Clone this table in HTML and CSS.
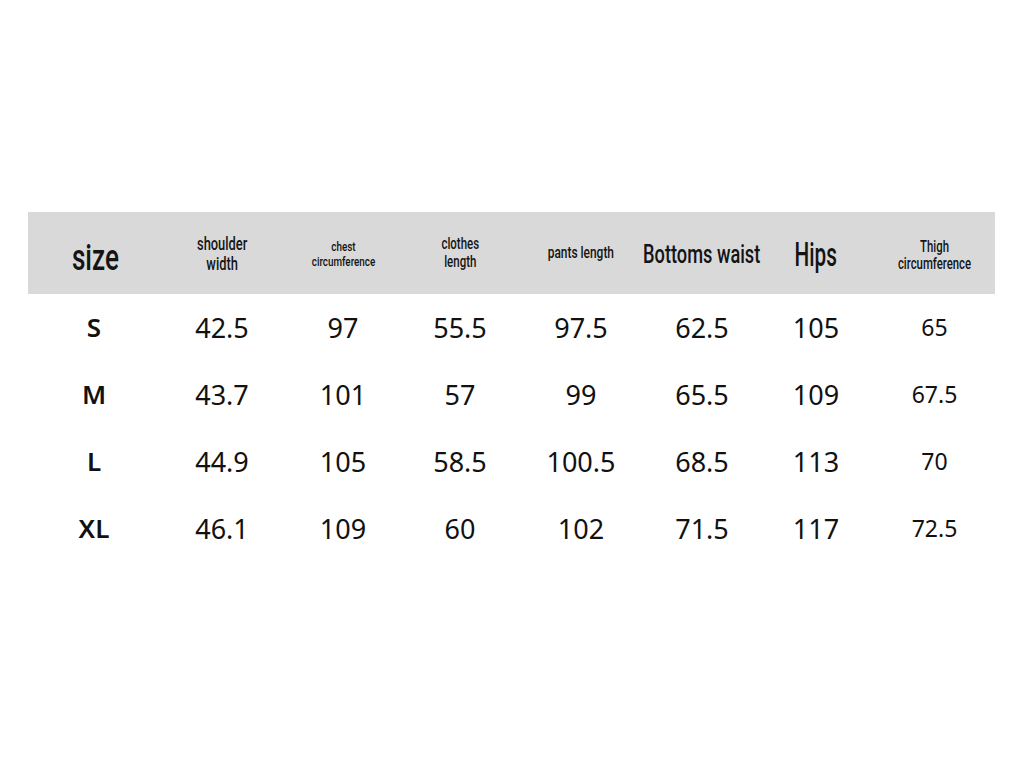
FILE: index.html
```html
<!DOCTYPE html>
<html>
<head>
<meta charset="utf-8">
<link rel="stylesheet" href="styles.css">
</head>
<body>
<div class="sheet">
  <div class="row head">
    <div class="cell"><span class="h h-size">size</span></div>
    <div class="cell"><span class="h h-shoulder">shoulder<br>width</span></div>
    <div class="cell"><span class="h h-chest">chest<br>circumference</span></div>
    <div class="cell"><span class="h h-clothes">clothes<br>length</span></div>
    <div class="cell"><span class="h h-pants">pants length</span></div>
    <div class="cell"><span class="h h-waist">Bottoms waist</span></div>
    <div class="cell"><span class="h h-hips">Hips</span></div>
    <div class="cell"><span class="h h-thigh">Thigh<br>circumference</span></div>
  </div>
  <div class="row data">
    <div class="cell sz">S</div><div class="cell">42.5</div><div class="cell">97</div><div class="cell">55.5</div><div class="cell">97.5</div><div class="cell">62.5</div><div class="cell">105</div><div class="cell sm">65</div>
  </div>
  <div class="row data">
    <div class="cell sz">M</div><div class="cell">43.7</div><div class="cell">101</div><div class="cell">57</div><div class="cell">99</div><div class="cell">65.5</div><div class="cell">109</div><div class="cell sm">67.5</div>
  </div>
  <div class="row data">
    <div class="cell sz">L</div><div class="cell">44.9</div><div class="cell">105</div><div class="cell">58.5</div><div class="cell">100.5</div><div class="cell">68.5</div><div class="cell">113</div><div class="cell sm">70</div>
  </div>
  <div class="row data">
    <div class="cell sz">XL</div><div class="cell">46.1</div><div class="cell">109</div><div class="cell">60</div><div class="cell">102</div><div class="cell">71.5</div><div class="cell">117</div><div class="cell sm">72.5</div>
  </div>
</div>
</body>
</html>
```

FILE: styles.css
```css
html, body {
  margin: 0;
  padding: 0;
  background: #ffffff;
}
body {
  width: 1024px;
  height: 768px;
  overflow: hidden;
  font-family: "Noto Sans", "Open Sans", sans-serif;
  color: #111111;
}
.sheet {
  margin: 212px 0 0 28px;
  width: 967px;
}
.row {
  display: grid;
  grid-template-columns: 134px 120px 122px 112px 130px 112px 116px 121px;
}
.head {
  height: 82px;
  background: #d9d9d9;
}
.cell {
  display: flex;
  align-items: center;
  justify-content: center;
  text-align: center;
}
.h {
  display: inline-block;
  font-family: Roboto, "Noto Sans", sans-serif;
  font-weight: 500;
  color: #141414;
  white-space: nowrap;
}
.h-size { font-size: 36px; transform: scaleX(0.725); padding-top: 9px; }
.h-shoulder { font-size: 18px; line-height: 20px; transform: scaleX(0.715); padding-top: 2px; }
.h-chest { font-size: 13.5px; line-height: 15px; transform: scaleX(0.73); padding-top: 2px; }
.h-clothes { font-size: 16px; line-height: 18px; transform: scaleX(0.717); }
.h-pants { font-size: 16.5px; transform: scaleX(0.723); padding-bottom: 2px; }
.h-waist { font-size: 26px; transform: scaleX(0.70); padding-top: 2px; }
.h-hips { font-size: 34px; transform: scaleX(0.61); padding-top: 2px; }
.h-thigh { font-size: 16px; line-height: 17px; transform: scaleX(0.71); padding-top: 4px; }
.data {
  height: 67px;
  font-size: 27px;
}
.data .cell {
  padding-bottom: 1px;
}
.data .sz {
  font-size: 26px;
  font-weight: 600;
  padding-right: 2px;
}
.data .sm {
  font-size: 23px;
}
```
